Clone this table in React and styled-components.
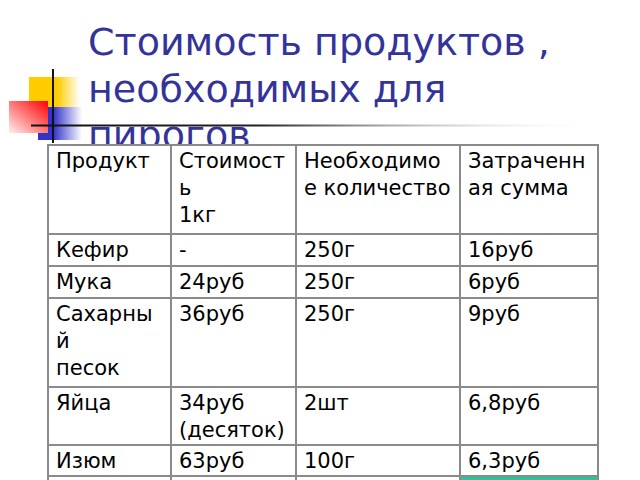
import React from 'react';
import styled, { createGlobalStyle } from 'styled-components';

const GlobalStyle = createGlobalStyle`
    html, body {
        margin: 0;
        padding: 0;
        background: #ffffff;
    }
    body {
        font-family: "DejaVu Sans", "Liberation Sans", sans-serif;
        overflow: hidden;
    }
`;

const Slide = styled.div`
    position: relative;
    width: 640px;
    height: 480px;
    overflow: hidden;
    background: #ffffff;
`;

// decoration in the top-left corner: coloured squares + crossing lines
const Decor = styled.svg`
    position: absolute;
    top: 0;
    left: 0;
    z-index: 0;
`;

const Title = styled.h1`
    position: relative;
    z-index: 1;
    margin: 0 0 0 88px;
    padding-top: 19px;
    font-family: "DejaVu Sans", "Liberation Sans", sans-serif;
    font-weight: normal;
    font-size: 38px;
    line-height: 46.5px;
    color: #333399;
`;

const PriceTable = styled.table`
    position: relative;
    z-index: 2;
    margin: -15px 0 0 47px;
    width: 550px;
    table-layout: fixed;
    border-collapse: collapse;
    background: #ffffff;
`;

const Row = styled.tr`
    height: ${p => p.$h}px;
`;

const Cell = styled.td`
    padding: 2px 7px 0;
    vertical-align: top;
    border: 2px solid #8a8a8a;
    font-size: 21px;
    line-height: 27px;
    color: #000000;
    white-space: nowrap;
    background: ${p => (p.$accent ? '#1fc99b' : '#ffffff')};
    border-top-color: ${p => (p.$accent ? '#1fc99b' : '#8a8a8a')};
`;

const rows = [
    { h: 89, cells: [['Продукт'], ['Стоимост', 'ь', '1кг'], ['Необходимо', 'е количество'], ['Затраченн', 'ая сумма']] },
    { h: 32, cells: [['Кефир'], ['-'], ['250г'], ['16руб']] },
    { h: 32, cells: [['Мука'], ['24руб'], ['250г'], ['6руб']] },
    { h: 89, cells: [['Сахарны', 'й', 'песок'], ['36руб'], ['250г'], ['9руб']] },
    { h: 58, cells: [['Яйца'], ['34руб', '(десяток)'], ['2шт'], ['6,8руб']] },
    { h: 31, cells: [['Изюм'], ['63руб'], ['100г'], ['6,3руб']] },
];

const App = () => {
    return (
        <Slide>
            <GlobalStyle />
            <Decor width="640" height="150" viewBox="0 0 640 150">
                <defs>
                    <linearGradient id="yellowFade" x1="0" y1="0" x2="1" y2="0">
                        <stop offset="0.55" stopColor="#ffcc00" />
                        <stop offset="1" stopColor="#ffffff" />
                    </linearGradient>
                    <linearGradient id="blueFade" x1="0" y1="0" x2="1" y2="0">
                        <stop offset="0.35" stopColor="#3333cc" />
                        <stop offset="1" stopColor="#ffffff" />
                    </linearGradient>
                    <linearGradient id="redFade" x1="0" y1="1" x2="1" y2="0">
                        <stop offset="0" stopColor="#fff0f0" />
                        <stop offset="1" stopColor="#ff0000" />
                    </linearGradient>
                    <linearGradient id="lineFade" x1="0" y1="0" x2="1" y2="0">
                        <stop offset="0" stopColor="#111111" />
                        <stop offset="0.4" stopColor="#222222" />
                        <stop offset="1" stopColor="#ffffff" stopOpacity="0" />
                    </linearGradient>
                </defs>
                <rect x="29" y="77" width="51" height="30" fill="url(#yellowFade)" />
                <rect x="38" y="107" width="44" height="33" fill="url(#blueFade)" />
                <rect x="9" y="101" width="39" height="32" fill="url(#redFade)" />
                <rect x="31" y="124.5" width="570" height="2" fill="url(#lineFade)" />
                <rect x="52" y="69" width="2" height="74" fill="#111111" />
            </Decor>
            <Title>
                Стоимость продуктов ,<br />
                необходимых для<br />
                пирогов
            </Title>
            <PriceTable>
                <colgroup>
                    <col style={{ width: 123 }} />
                    <col style={{ width: 125 }} />
                    <col style={{ width: 164 }} />
                    <col style={{ width: 138 }} />
                </colgroup>
                <tbody>
                    {rows.map((row, i) => (
                        <Row key={i} $h={row.h}>
                            {row.cells.map((lines, j) => (
                                <Cell key={j}>
                                    {lines.map((line, k) => (
                                        <React.Fragment key={k}>
                                            {k > 0 && <br />}
                                            {line}
                                        </React.Fragment>
                                    ))}
                                </Cell>
                            ))}
                        </Row>
                    ))}
                    <Row $h={32}>
                        <Cell />
                        <Cell />
                        <Cell />
                        <Cell $accent />
                    </Row>
                </tbody>
            </PriceTable>
        </Slide>
    );
};

export default App;
